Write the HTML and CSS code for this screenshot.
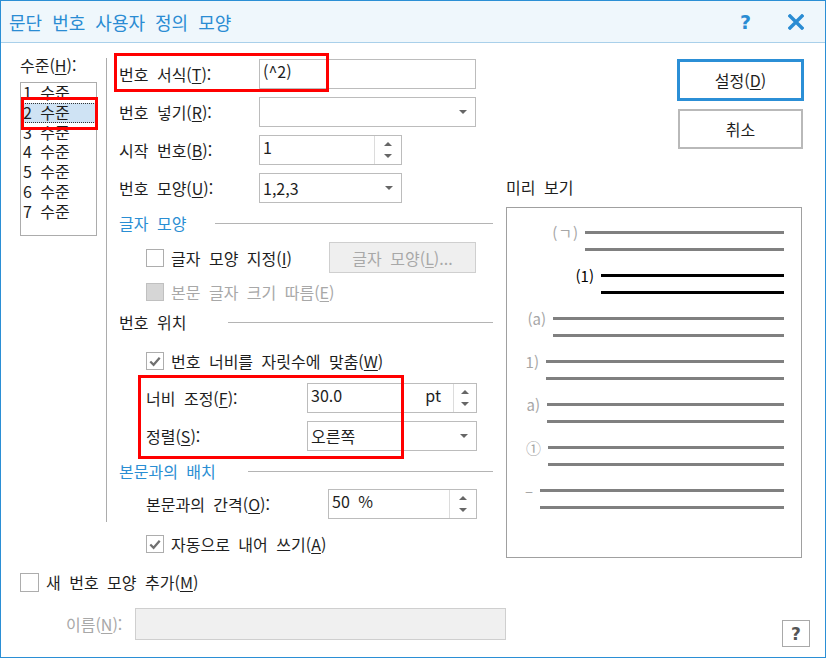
FILE: index.html
```html
<!DOCTYPE html>
<html lang="ko">
<head>
<meta charset="utf-8">
<title>문단 번호 사용자 정의 모양</title>
<link rel="stylesheet" href="styles.css">
</head>
<body>
<div class="dialog">
  <div class="titlebar">
    <span class="title">문단 번호 사용자 정의 모양</span>
    <span class="tb-btns">
      <span class="tb-help">?</span>
      <svg class="tb-close" width="16" height="16" viewBox="0 0 16 16"><path d="M2 2 L14 14 M14 2 L2 14" stroke="#2a8cd3" stroke-width="3.4" stroke-linecap="square" fill="none"/></svg>
    </span>
  </div>

  <div class="body">
    <div class="levels">
      <div class="lbl">수준(<u>H</u>):</div>
      <div class="listbox">
        <div class="item">1 수준</div>
        <div class="item sel">2 수준</div>
        <div class="item">3 수준</div>
        <div class="item">4 수준</div>
        <div class="item">5 수준</div>
        <div class="item">6 수준</div>
        <div class="item">7 수준</div>
      </div>
    </div>

    <div class="vdiv"></div>

    <div class="form">
      <div class="row">
        <span class="flabel">번호 서식(<u>T</u>):</span>
        <div class="field w217"><span class="etxt">(^2)</span></div>
      </div>
      <div class="row gap8">
        <span class="flabel">번호 넣기(<u>R</u>):</span>
        <div class="field w217 combo"><span class="ctxt"></span><span class="arrow"></span></div>
      </div>
      <div class="row gap8">
        <span class="flabel">시작 번호(<u>B</u>):</span>
        <div class="field w143"><span class="etxt">1</span><span class="spin"><span class="up"></span><span class="dn"></span></span></div>
      </div>
      <div class="row gap8">
        <span class="flabel">번호 모양(<u>U</u>):</span>
        <div class="field w143 combo"><span class="ctxt">1,2,3</span><span class="arrow"></span></div>
      </div>

      <div class="hdr blue"><span class="ht ht96">글자 모양</span><span class="hline"></span></div>

      <div class="chk-row ind r31">
        <span class="cb"></span><span>글자 모양 지정(<u>I</u>)</span>
        <span class="gbtn">글자 모양(<u>L</u>)...</span>
      </div>
      <div class="chk-row ind dis mt9">
        <span class="cb cb-dis"></span><span>본문 글자 크기 따름(<u>E</u>)</span>
      </div>

      <div class="hdr mt12"><span class="ht ht109">번호 위치</span><span class="hline"></span></div>

      <div class="chk-row ind mt19">
        <span class="cb"><svg width="17" height="17" viewBox="0 0 17 17"><path d="M3.5 8.5 L7 12 L13.5 4.5" stroke="#707070" stroke-width="2.4" fill="none"/></svg></span><span>번호 너비를 자릿수에 맞춤(<u>W</u>)</span>
      </div>

      <div class="row ind mt12">
        <span class="flabel l162">너비 조정(<u>F</u>):</span>
        <div class="field w170"><span class="etxt">30.0</span><span class="unit">pt</span><span class="spin s23"><span class="up"></span><span class="dn"></span></span></div>
      </div>
      <div class="row ind gap8">
        <span class="flabel l162">정렬(<u>S</u>):</span>
        <div class="field w170 combo"><span class="ctxt">오른쪽</span><span class="arrow"></span></div>
      </div>

      <div class="hdr blue mt12"><span class="ht ht129">본문과의 배치</span><span class="hline"></span></div>

      <div class="row ind gap8">
        <span class="flabel l181">본문과의 간격(<u>O</u>):</span>
        <div class="field w149"><span class="etxt">50 %</span><span class="spin"><span class="up"></span><span class="dn"></span></span></div>
      </div>

      <div class="chk-row ind mt15">
        <span class="cb"><svg width="17" height="17" viewBox="0 0 17 17"><path d="M3.5 8.5 L7 12 L13.5 4.5" stroke="#707070" stroke-width="2.4" fill="none"/></svg></span><span>자동으로 내어 쓰기(<u>A</u>)</span>
      </div>
    </div>

    <div class="side">
      <button class="btn btn-primary">설정(<u>D</u>)</button>
      <button class="btn btn-cancel">취소</button>
      <div class="preview-lbl">미리 보기</div>
      <div class="preview">
        <div class="entry e1"><span class="pl">(&#8202;ㄱ&#8202;)</span><span class="ln l1"></span><span class="ln l2"></span></div>
        <div class="entry e2 cur"><span class="pl">(1)</span><span class="ln l1"></span><span class="ln l2"></span></div>
        <div class="entry e3"><span class="pl">(a)</span><span class="ln l1"></span><span class="ln l2"></span></div>
        <div class="entry e4"><span class="pl">1)</span><span class="ln l1"></span><span class="ln l2"></span></div>
        <div class="entry e5"><span class="pl">a)</span><span class="ln l1"></span><span class="ln l2"></span></div>
        <div class="entry e6"><span class="pl">①</span><span class="ln l1"></span><span class="ln l2"></span></div>
        <div class="entry e7"><span class="pl">–</span><span class="ln l1"></span><span class="ln l2"></span></div>
      </div>
    </div>
  </div>

  <div class="bottom">
    <div class="chk-row">
      <span class="cb cb19"></span><span>새 번호 모양 추가(<u>M</u>)</span>
    </div>
    <div class="name-row">
      <span class="name-lbl">이름(<u>N</u>):</span>
      <span class="name-input"></span>
      <span class="help-btn">?</span>
    </div>
  </div>

  <div class="mark m1"></div>
  <div class="mark m2"></div>
  <div class="mark m3"></div>
</div>
</body>
</html>
```

FILE: styles.css
```css
* { box-sizing: border-box; }
html, body { margin: 0; padding: 0; }
body {
  width: 826px;
  height: 658px;
  overflow: hidden;
  background: #fff;
  font-family: "Noto Sans CJK KR", "Noto Sans", sans-serif;
  font-size: 16px;
  color: #1e1e1e;
  word-spacing: 4px;
}
u { text-decoration: underline; text-underline-offset: 2px; }

.dialog {
  position: relative;
  width: 826px;
  height: 658px;
  border: 1px solid #2b8fd5;
  background: #fff;
  display: flex;
  flex-direction: column;
}

/* title bar */
.titlebar {
  height: 42px;
  flex: none;
  background: #eff7fc;
  border-bottom: 1px solid #a9d0ea;
  display: flex;
  align-items: center;
  padding-left: 8px;
}
.title { font-size: 18px; color: #2a8cd3; word-spacing: 5px; }
.tb-btns { margin-left: auto; display: flex; align-items: center; padding-right: 21px; }
.tb-help { font-family: "DejaVu Sans", sans-serif; font-weight: bold; font-size: 19px; color: #2a8cd3; margin-right: 37px; }
.tb-close { display: block; }

/* body */
.body { display: flex; align-items: flex-start; flex: none; }

.levels { margin-left: 19px; width: 77px; padding-top: 12px; }
.lbl { height: 20px; line-height: 20px; white-space: nowrap; }
.listbox { margin-top: 7px; height: 154px; border: 1px solid #acacac; }
.item { height: 19.75px; line-height: 19.75px; padding-left: 2px; white-space: nowrap; }
.item.sel { background: #cfe3f4; outline: 1px dotted #333; outline-offset: -1px; }

.vdiv { width: 1px; height: 464px; background: #acacac; margin-top: 15px; margin-left: 9px; flex: none; }

.form { margin-left: 12px; width: 374px; padding-top: 16px; display: flex; flex-direction: column; flex: none; }
.row { display: flex; align-items: center; height: 30px; }
.gap8 { margin-top: 8px; }
.mt9 { margin-top: 9px; }
.mt12 { margin-top: 12px; }
.mt15 { margin-top: 15px; }
.mt19 { margin-top: 19px; }
.ind { padding-left: 27px; }
.flabel { width: 140px; flex: none; white-space: nowrap; }
.l162 { width: 161px; }
.l181 { width: 182px; }

.field { height: 30px; border: 1px solid #bcbcbc; background: #fff; display: flex; flex: none; position: relative; }
.w217 { width: 217px; }
.w143 { width: 143px; }
.w170 { width: 170px; }
.w149 { width: 149px; }
.etxt { flex: 1; padding: 1px 0 0 3px; line-height: 20px; white-space: nowrap; }
.ctxt { flex: 1; align-self: center; padding-left: 3px; line-height: 20px; }
.unit { align-self: flex-start; padding-top: 1px; line-height: 20px; padding-right: 12px; }
.arrow {
  align-self: center;
  margin-right: 8px;
  width: 0; height: 0;
  border-left: 4px solid transparent;
  border-right: 4px solid transparent;
  border-top: 4px solid #666;
}
.spin { width: 27px; flex: none; border-left: 1px solid #dcdcdc; display: flex; flex-direction: column; }
.spin.s23 { width: 23px; }
.spin .up, .spin .dn { flex: 1; display: flex; align-items: center; justify-content: center; }
.spin .up::after, .spin .dn::after {
  content: "";
  width: 0; height: 0;
  border-left: 4px solid transparent;
  border-right: 4px solid transparent;
}
.spin .up::after { border-bottom: 4px solid #666; margin-top: 2px; }
.spin .dn::after { border-top: 4px solid #666; margin-bottom: 2px; }

.hdr { display: flex; align-items: center; height: 20px; margin-top: 10px; }
.hdr.blue { color: #2a8ed3; }
.ht { flex: none; white-space: nowrap; }
.ht96 { width: 96px; }
.ht109 { width: 109px; }
.ht129 { width: 129px; }
.hline { flex: 1; height: 1px; background: #b4b4b4; }

.chk-row { display: flex; align-items: center; height: 20px; white-space: nowrap; }
.r31 { height: 31px; margin-top: 9px; }
.cb { width: 18px; height: 18px; border: 1px solid #adadad; background: #fff; margin-right: 7px; flex: none; display: flex; align-items: center; justify-content: center; }
.cb-dis { background: #d6d6d6; border-color: #c0c0c0; }
.cb19 { width: 19px; height: 19px; }
.dis { color: #a8a8a8; }
.gbtn {
  margin-left: auto;
  margin-right: 17px;
  width: 147px;
  height: 31px;
  border: 1px solid #cfcfcf;
  background: #efefef;
  color: #a8a8a8;
  display: flex;
  align-items: center;
  justify-content: center;
}

/* right side */
.side { margin-left: 13px; width: 298px; padding-top: 16px; display: flex; flex-direction: column; flex: none; }
.btn { font: inherit; color: #1e1e1e; background: #fff; padding: 0; align-self: flex-end; word-spacing: 4px; }
.btn-primary { width: 127px; height: 42px; border: 3px solid #2b8fd6; }
.btn-cancel { width: 125px; height: 40px; margin-top: 8px; margin-right: 1px; border: 2px solid #b9b9b9; }
.preview-lbl { margin-top: 28px; height: 20px; line-height: 20px; }
.preview { margin-top: 10px; width: 296px; height: 351px; border: 1px solid #a0a0a0; padding: 16px 17px 0 0; display: flex; flex-direction: column; gap: 9px; }
.entry { display: grid; grid-template-rows: 17px 17px; }
.e1 { grid-template-columns: 78px 1fr; }
.e2 { grid-template-columns: 94px 1fr; }
.e3 { grid-template-columns: 46px 1fr; }
.e4 { grid-template-columns: 39px 1fr; }
.e5 { grid-template-columns: 40px 1fr; }
.e6 { grid-template-columns: 41px 1fr; }
.e7 { grid-template-columns: 33px 1fr; }
.pl { grid-row: 1; grid-column: 1; text-align: right; padding-right: 7px; font-size: 15px; line-height: 17px; color: #a6a6a6; white-space: nowrap; word-spacing: 0; }
.ln { grid-column: 2; height: 3px; align-self: center; background: #808080; }
.l1 { grid-row: 1; }
.l2 { grid-row: 2; }
.cur .pl { color: #000; }
.cur .ln { background: #000; }

/* bottom */
.bottom { padding-left: 19px; margin-top: 14px; }
.name-row { display: flex; align-items: flex-start; margin-top: 16px; }
.name-lbl { margin-left: 46px; width: 69px; height: 32px; line-height: 32px; color: #a8a8a8; white-space: nowrap; }
.name-input { width: 371px; height: 32px; background: #f0f0f0; border: 1px solid #cfcfcf; }
.help-btn {
  margin-left: auto;
  margin-right: 15px;
  margin-top: 12px;
  width: 28px;
  height: 27px;
  border: 1px solid #a9a9a9;
  display: flex;
  align-items: center;
  justify-content: center;
  font-family: "DejaVu Sans", sans-serif;
  font-weight: bold;
  font-size: 17px;
  color: #555;
}

/* annotation boxes */
.mark { position: absolute; border: 3px solid #f00; pointer-events: none; }
.m1 { left: 113px; top: 52px; width: 215px; height: 39px; }
.m2 { left: 20px; top: 96px; width: 77px; height: 33px; }
.m3 { left: 137px; top: 374px; width: 266px; height: 84px; }
```
